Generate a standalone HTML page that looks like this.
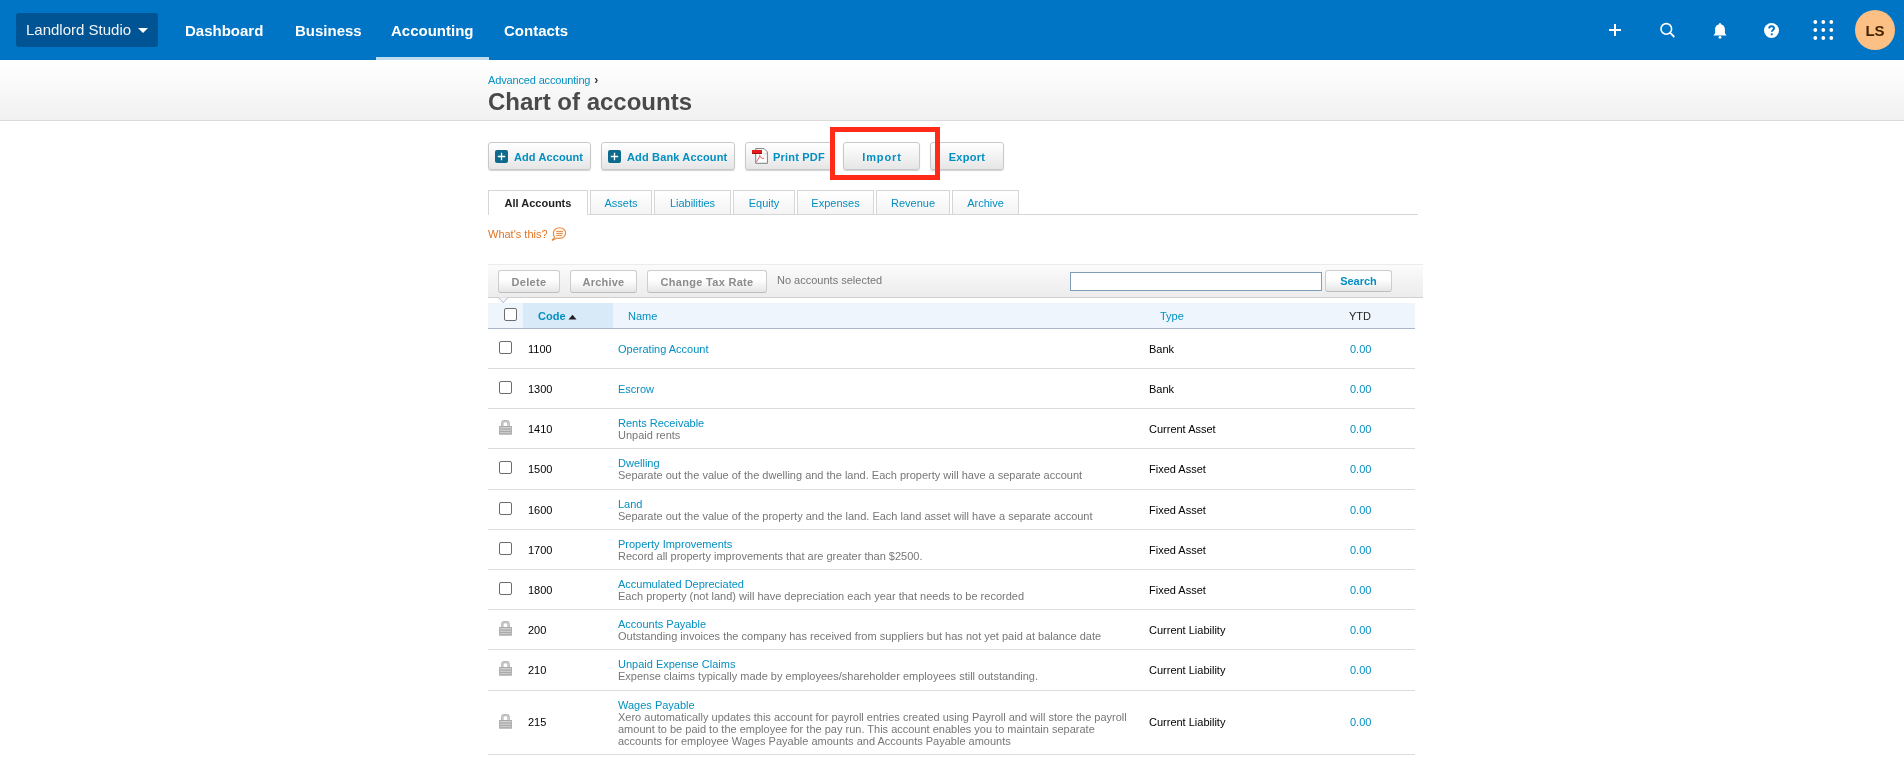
<!DOCTYPE html>
<html><head><meta charset="utf-8">
<style>
*{box-sizing:border-box}
html,body{margin:0;padding:0;width:1904px;height:760px;overflow:hidden;background:#fff;font-family:"Liberation Sans",sans-serif;}
body>*{will-change:transform}
.abs{position:absolute}
#nav{position:absolute;left:0;top:0;width:1904px;height:60px;background:#0074c5}
#org{position:absolute;left:16px;top:13px;width:142px;height:34px;background:#005493;border-radius:3px;color:#f0f4f8;font-size:15px;line-height:34px;padding-left:10px;white-space:nowrap}
#org .car{position:absolute;left:122px;top:15px;width:0;height:0;border-left:5px solid transparent;border-right:5px solid transparent;border-top:5px solid #fff}
.nv{position:absolute;top:0;height:60px;line-height:61px;color:#fff;font-size:15px;font-weight:700;white-space:nowrap}
#uline{position:absolute;left:376px;top:57px;width:113px;height:3px;background:#bddcef}
#hdr{position:absolute;left:0;top:60px;width:1904px;height:61px;background:linear-gradient(#fff,#f1f1f1);border-bottom:1px solid #dadada}
.t11{font-size:11px;white-space:nowrap}
a,.lnk{color:#048fc2;text-decoration:none}
.btn{position:absolute;top:142px;height:28px;border:1px solid #c8c8c8;border-radius:3px;background:linear-gradient(#fff,#e6e6e6);box-shadow:0 1px 1px rgba(0,0,0,.18);font-size:11px;font-weight:700;color:#048fc2;white-space:nowrap;line-height:28px}
.tab{position:absolute;top:190px;height:24px;border:1px solid #d6d6d6;border-bottom:none;background:linear-gradient(#fff,#f4f4f4);font-size:11px;color:#048fc2;text-align:center;line-height:24px;white-space:nowrap}
.tbtn{position:absolute;top:270px;height:23px;border:1px solid #cdcdcd;border-bottom-color:#bdbdbd;border-radius:3px;background:linear-gradient(#fff 40%,#e6e6e6);font-size:11px;font-weight:700;color:#8c8c8c;text-align:center;line-height:23px;white-space:nowrap}
.row{position:absolute;left:488px;width:927px;border-bottom:1px solid #dcdcdc}
.cb{position:absolute;width:13px;height:13px;border:1px solid #6d6d6d;border-radius:2px;background:#fff}
.cell{position:absolute;font-size:11px;line-height:12px;white-space:nowrap}
.code{color:#000}
.nm{color:#048fc2}
.ds{color:#777}
.ty{color:#000}
.ytd{color:#048fc2}
</style></head><body>
<div id="nav">
  <div id="org">Landlord Studio<span class="car"></span></div>
  <div class="nv" style="left:185px">Dashboard</div>
  <div class="nv" style="left:295px">Business</div>
  <div class="nv" style="left:391px">Accounting</div>
  <div class="nv" style="left:504px">Contacts</div>
  <div id="uline"></div>
</div>
<!-- right icons -->
<svg class="abs" style="left:1601px;top:16px" width="28" height="28" viewBox="0 0 28 28"><path d="M14 8v12M8 14h12" stroke="#fff" stroke-width="2" fill="none"/></svg>
<svg class="abs" style="left:1653px;top:16px" width="28" height="28" viewBox="0 0 28 28"><circle cx="13.3" cy="12.9" r="5.3" stroke="#fff" stroke-width="1.6" fill="none"/><path d="M17 16.7l4.3 4.3" stroke="#fff" stroke-width="1.8" fill="none"/></svg>
<svg class="abs" style="left:1706px;top:17px" width="28" height="28" viewBox="0 0 28 28"><path d="M14 7.2c-2.9 0-4.9 2.2-4.9 5.1v3.9l-1.7 2.3h13.2l-1.7-2.3v-3.9c0-2.9-2-5.1-4.9-5.1z" fill="#fff"/><circle cx="14" cy="20.3" r="1.4" fill="#fff"/><circle cx="14" cy="6.9" r="1" fill="#fff"/></svg>
<svg class="abs" style="left:1758px;top:16px" width="28" height="28" viewBox="0 0 28 28"><circle cx="13.5" cy="14.5" r="7.5" fill="#fff"/><path d="M11.2 12.5c0-1.4 1-2.3 2.4-2.3s2.4.9 2.4 2.2c0 1.6-2.1 1.6-2.1 3.3" stroke="#0074c5" stroke-width="1.9" fill="none"/><circle cx="13.8" cy="18.3" r="1.1" fill="#0074c5"/></svg>
<svg class="abs" style="left:1809px;top:16px" width="28" height="28" viewBox="0 0 28 28"><g fill="#fff"><circle cx="6.3" cy="6" r="1.9"/><circle cx="14.3" cy="6" r="1.9"/><circle cx="22.3" cy="6" r="1.9"/><circle cx="6.3" cy="14" r="1.9"/><circle cx="14.3" cy="14" r="1.9"/><circle cx="22.3" cy="14" r="1.9"/><circle cx="6.3" cy="22" r="1.9"/><circle cx="14.3" cy="22" r="1.9"/><circle cx="22.3" cy="22" r="1.9"/></g></svg>
<div class="abs" style="left:1855px;top:10px;width:40px;height:40px;border-radius:50%;background:#fcbf84;color:#432300;font-size:15px;font-weight:700;text-align:center;line-height:41px">LS</div>

<div id="hdr"></div>
<div class="abs t11" style="left:488px;top:74px;line-height:13px"><span class="lnk" style="letter-spacing:-0.15px">Advanced accounting</span><span style="color:#333;font-weight:700;font-size:12px;position:relative;left:4px">&#8250;</span></div>
<div class="abs" style="left:488px;top:88px;font-size:24px;font-weight:700;color:#4a4a4a;line-height:28px;white-space:nowrap">Chart of accounts</div>

<div class="btn" style="left:488px;width:103px"><svg class="abs" style="left:6px;top:7px" width="13" height="13" viewBox="0 0 13 13"><rect x="0" y="0" width="13" height="13" rx="2" fill="#0e6a8c"/><path d="M6.5 2.8v7.4M2.8 6.5h7.4" stroke="#fff" stroke-width="1.3"/></svg><span class="abs" style="left:25px;top:0;letter-spacing:0.1px">Add Account</span></div>
<div class="btn" style="left:601px;width:134px"><svg class="abs" style="left:6px;top:7px" width="13" height="13" viewBox="0 0 13 13"><rect x="0" y="0" width="13" height="13" rx="2" fill="#0e6a8c"/><path d="M6.5 2.8v7.4M2.8 6.5h7.4" stroke="#fff" stroke-width="1.3"/></svg><span class="abs" style="left:25px;top:0;letter-spacing:0.15px">Add Bank Account</span></div>
<div class="btn" style="left:745px;width:90px"><svg class="abs" style="left:6px;top:5px" width="17" height="17" viewBox="0 0 17 17"><path d="M3.7 0.6H12.1L15.4 3.9V15.3H3.7Z" fill="#fff" stroke="#707070" stroke-width="0.9"/><path d="M11.2 5.7H15.2" stroke="#bbb" stroke-width="0.6"/><rect x="0" y="2" width="10" height="3" fill="#e41c1c"/><rect x="0" y="5" width="10" height="1" fill="#a50d0d"/><path d="M4.4 14L7.8 8.4V6.7M7.8 8.4L10.2 10.3H12.2" stroke="#e03232" stroke-width="0.8" fill="none"/></svg><span class="abs" style="left:27px;top:0;letter-spacing:0.2px">Print PDF</span></div>
<div class="btn" style="left:843px;width:77px;text-align:center;letter-spacing:0.9px;text-indent:1px">Import</div>
<div class="btn" style="left:930px;width:74px;text-align:center;letter-spacing:0.3px">Export</div>
<div class="abs" style="left:830px;top:127px;width:110px;height:53px;border:5px solid #ff2b18"></div>

<div class="abs" style="left:488px;top:214px;width:930px;height:1px;background:#d6d6d6"></div>
<div class="tab" style="left:488px;width:100px;background:#fff;height:25px;color:#222;font-weight:700">All Accounts</div>
<div class="tab" style="left:590px;width:62px">Assets</div>
<div class="tab" style="left:654px;width:77px">Liabilities</div>
<div class="tab" style="left:733px;width:62px">Equity</div>
<div class="tab" style="left:797px;width:77px">Expenses</div>
<div class="tab" style="left:876px;width:74px">Revenue</div>
<div class="tab" style="left:952px;width:67px">Archive</div>

<div class="abs t11" style="left:488px;top:228px;color:#e07320;line-height:13px">What's this?</div>
<svg class="abs" style="left:551px;top:227px" width="17" height="16" viewBox="0 0 17 16"><path d="M8.6 0.7c3.4 0 6 2.3 6 5.3s-2.6 5.4-6 5.4c-.9 0-1.7-.2-2.4-.4L1 13.4l2.6-3.1C2.7 9.3 2.4 7.9 2.4 6.1c0-3 2.8-5.4 6.2-5.4z" fill="#fff8ee" stroke="#e48a45" stroke-width="1.1"/><path d="M5.3 4.4h6.6M5.3 6.4h6.6M5.3 8.4h5.6" stroke="#e07a32" stroke-width="0.9"/></svg>


<div class="abs" style="left:488px;top:264px;width:935px;height:34px;background:linear-gradient(#fbfbfb,#ececec);border-top:1px solid #ebebeb;border-bottom:1px solid #cfcfcf"></div>
<div class="tbtn" style="left:498px;width:62px;letter-spacing:0.3px">Delete</div>
<div class="tbtn" style="left:570px;width:67px;letter-spacing:0.2px">Archive</div>
<div class="tbtn" style="left:647px;width:120px;letter-spacing:0.3px">Change Tax Rate</div>
<div class="abs t11" style="left:777px;top:274px;color:#777;line-height:12px">No accounts selected</div>
<div class="abs" style="left:1070px;top:272px;width:252px;height:19px;background:#fff;border:1px solid #7f9db9"></div>
<div class="tbtn" style="left:1325px;width:67px;height:22px;color:#048fc2;line-height:20px">Search</div>
<svg class="abs" style="left:498px;top:297px" width="11" height="7" viewBox="0 0 11 7"><path d="M0.5 0.5L5.2 5.8 9.9 0.5" fill="#f3f6fb" stroke="#a9b1bf" stroke-width="0.9"/></svg>

<div class="abs" style="left:488px;top:303px;width:927px;height:26px;background:#eef5fd;border-bottom:1px solid #a9b6c6"></div>
<div class="abs" style="left:523px;top:303px;width:90px;height:25px;background:#d8e9f7"></div>
<div class="cb" style="left:504px;top:308px"></div>
<div class="abs t11" style="left:538px;top:310px;color:#048fc2;font-weight:700;line-height:12px">Code</div>
<svg class="abs" style="left:568px;top:314px" width="9" height="6" viewBox="0 0 9 6"><path d="M0.5 5.5L4.5 0.8 8.5 5.5z" fill="#222"/></svg>
<div class="abs t11" style="left:628px;top:310px;color:#048fc2;line-height:12px">Name</div>
<div class="abs t11" style="left:1160px;top:310px;color:#048fc2;line-height:12px">Type</div>
<div class="abs t11" style="left:1349px;top:310px;color:#222;line-height:12px">YTD</div>
<div class="row" style="top:329px;height:40px"><div class="cb" style="left:11px;top:12px"></div><div class="cell code" style="left:40px;top:14px">1100</div><div class="cell" style="left:130px;top:14px"><div class="nm">Operating Account</div></div><div class="cell ty" style="left:661px;top:14px">Bank</div><div class="cell ytd" style="left:862px;top:14px">0.00</div></div>
<div class="row" style="top:369px;height:40px"><div class="cb" style="left:11px;top:12px"></div><div class="cell code" style="left:40px;top:14px">1300</div><div class="cell" style="left:130px;top:14px"><div class="nm">Escrow</div></div><div class="cell ty" style="left:661px;top:14px">Bank</div><div class="cell ytd" style="left:862px;top:14px">0.00</div></div>
<div class="row" style="top:409px;height:40px"><svg class="abs" style="left:10px;top:10px" width="16" height="17" viewBox="0 0 16 17"><path d="M4.3 8V4.4Q4.3 2.1 6.6 2.1H8.3Q10.6 2.1 10.6 4.4V8" fill="none" stroke="#a9a9a9" stroke-width="2.3"/><path d="M4.3 8V4.4Q4.3 2.1 6.6 2.1H8.3Q10.6 2.1 10.6 4.4V8" fill="none" stroke="#dedede" stroke-width="0.8"/><rect x="1.1" y="7" width="12.8" height="8.7" fill="#a9a9a9"/><rect x="2" y="8.2" width="11" height="1.1" fill="#dadada"/><rect x="2" y="10.7" width="11" height="1.1" fill="#d4d4d4"/><rect x="2" y="13.1" width="11" height="1.1" fill="#cecece"/></svg><div class="cell code" style="left:40px;top:14px">1410</div><div class="cell" style="left:130px;top:8px"><div class="nm">Rents Receivable</div><div class="ds">Unpaid rents</div></div><div class="cell ty" style="left:661px;top:14px">Current Asset</div><div class="cell ytd" style="left:862px;top:14px">0.00</div></div>
<div class="row" style="top:449px;height:41px"><div class="cb" style="left:11px;top:12px"></div><div class="cell code" style="left:40px;top:14px">1500</div><div class="cell" style="left:130px;top:8px"><div class="nm">Dwelling</div><div class="ds">Separate out the value of the dwelling and the land. Each property will have a separate account</div></div><div class="cell ty" style="left:661px;top:14px">Fixed Asset</div><div class="cell ytd" style="left:862px;top:14px">0.00</div></div>
<div class="row" style="top:490px;height:40px"><div class="cb" style="left:11px;top:12px"></div><div class="cell code" style="left:40px;top:14px">1600</div><div class="cell" style="left:130px;top:8px"><div class="nm">Land</div><div class="ds">Separate out the value of the property and the land. Each land asset will have a separate account</div></div><div class="cell ty" style="left:661px;top:14px">Fixed Asset</div><div class="cell ytd" style="left:862px;top:14px">0.00</div></div>
<div class="row" style="top:530px;height:40px"><div class="cb" style="left:11px;top:12px"></div><div class="cell code" style="left:40px;top:14px">1700</div><div class="cell" style="left:130px;top:8px"><div class="nm">Property Improvements</div><div class="ds">Record all property improvements that are greater than $2500.</div></div><div class="cell ty" style="left:661px;top:14px">Fixed Asset</div><div class="cell ytd" style="left:862px;top:14px">0.00</div></div>
<div class="row" style="top:570px;height:40px"><div class="cb" style="left:11px;top:12px"></div><div class="cell code" style="left:40px;top:14px">1800</div><div class="cell" style="left:130px;top:8px"><div class="nm">Accumulated Depreciated</div><div class="ds">Each property (not land) will have depreciation each year that needs to be recorded</div></div><div class="cell ty" style="left:661px;top:14px">Fixed Asset</div><div class="cell ytd" style="left:862px;top:14px">0.00</div></div>
<div class="row" style="top:610px;height:40px"><svg class="abs" style="left:10px;top:10px" width="16" height="17" viewBox="0 0 16 17"><path d="M4.3 8V4.4Q4.3 2.1 6.6 2.1H8.3Q10.6 2.1 10.6 4.4V8" fill="none" stroke="#a9a9a9" stroke-width="2.3"/><path d="M4.3 8V4.4Q4.3 2.1 6.6 2.1H8.3Q10.6 2.1 10.6 4.4V8" fill="none" stroke="#dedede" stroke-width="0.8"/><rect x="1.1" y="7" width="12.8" height="8.7" fill="#a9a9a9"/><rect x="2" y="8.2" width="11" height="1.1" fill="#dadada"/><rect x="2" y="10.7" width="11" height="1.1" fill="#d4d4d4"/><rect x="2" y="13.1" width="11" height="1.1" fill="#cecece"/></svg><div class="cell code" style="left:40px;top:14px">200</div><div class="cell" style="left:130px;top:8px"><div class="nm">Accounts Payable</div><div class="ds">Outstanding invoices the company has received from suppliers but has not yet paid at balance date</div></div><div class="cell ty" style="left:661px;top:14px">Current Liability</div><div class="cell ytd" style="left:862px;top:14px">0.00</div></div>
<div class="row" style="top:650px;height:41px"><svg class="abs" style="left:10px;top:10px" width="16" height="17" viewBox="0 0 16 17"><path d="M4.3 8V4.4Q4.3 2.1 6.6 2.1H8.3Q10.6 2.1 10.6 4.4V8" fill="none" stroke="#a9a9a9" stroke-width="2.3"/><path d="M4.3 8V4.4Q4.3 2.1 6.6 2.1H8.3Q10.6 2.1 10.6 4.4V8" fill="none" stroke="#dedede" stroke-width="0.8"/><rect x="1.1" y="7" width="12.8" height="8.7" fill="#a9a9a9"/><rect x="2" y="8.2" width="11" height="1.1" fill="#dadada"/><rect x="2" y="10.7" width="11" height="1.1" fill="#d4d4d4"/><rect x="2" y="13.1" width="11" height="1.1" fill="#cecece"/></svg><div class="cell code" style="left:40px;top:14px">210</div><div class="cell" style="left:130px;top:8px"><div class="nm">Unpaid Expense Claims</div><div class="ds">Expense claims typically made by employees/shareholder employees still outstanding.</div></div><div class="cell ty" style="left:661px;top:14px">Current Liability</div><div class="cell ytd" style="left:862px;top:14px">0.00</div></div>
<div class="row" style="top:691px;height:64px"><svg class="abs" style="left:10px;top:22px" width="16" height="17" viewBox="0 0 16 17"><path d="M4.3 8V4.4Q4.3 2.1 6.6 2.1H8.3Q10.6 2.1 10.6 4.4V8" fill="none" stroke="#a9a9a9" stroke-width="2.3"/><path d="M4.3 8V4.4Q4.3 2.1 6.6 2.1H8.3Q10.6 2.1 10.6 4.4V8" fill="none" stroke="#dedede" stroke-width="0.8"/><rect x="1.1" y="7" width="12.8" height="8.7" fill="#a9a9a9"/><rect x="2" y="8.2" width="11" height="1.1" fill="#dadada"/><rect x="2" y="10.7" width="11" height="1.1" fill="#d4d4d4"/><rect x="2" y="13.1" width="11" height="1.1" fill="#cecece"/></svg><div class="cell code" style="left:40px;top:25px">215</div><div class="cell" style="left:130px;top:8px"><div class="nm">Wages Payable</div><div class="ds">Xero automatically updates this account for payroll entries created using Payroll and will store the payroll</div><div class="ds">amount to be paid to the employee for the pay run. This account enables you to maintain separate</div><div class="ds">accounts for employee Wages Payable amounts and Accounts Payable amounts</div></div><div class="cell ty" style="left:661px;top:25px">Current Liability</div><div class="cell ytd" style="left:862px;top:25px">0.00</div></div>
</body></html>
